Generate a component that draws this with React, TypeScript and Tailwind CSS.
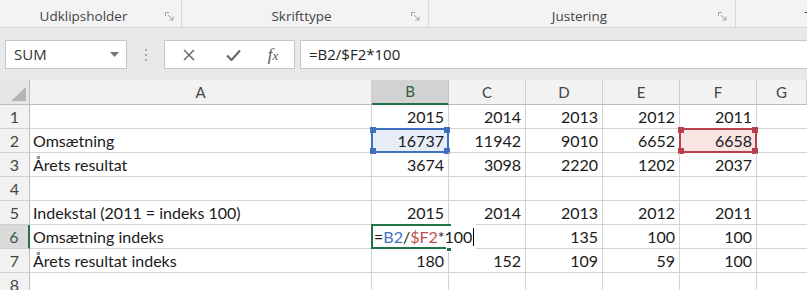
import React from "react";

const cellFont = { fontFamily: "Lato, 'Noto Sans', sans-serif" };

const rows: { n: number; a: string; vals: string[] }[] = [
  { n: 1, a: "", vals: ["2015", "2014", "2013", "2012", "2011"] },
  { n: 2, a: "Omsætning", vals: ["16737", "11942", "9010", "6652", "6658"] },
  { n: 3, a: "Årets resultat", vals: ["3674", "3098", "2220", "1202", "2037"] },
  { n: 4, a: "", vals: ["", "", "", "", ""] },
  { n: 5, a: "Indekstal (2011 = indeks 100)", vals: ["2015", "2014", "2013", "2012", "2011"] },
  { n: 6, a: "Omsætning indeks", vals: ["", "", "135", "100", "100"] },
  { n: 7, a: "Årets resultat indeks", vals: ["180", "152", "109", "59", "100"] },
  { n: 8, a: "", vals: ["", "", "", "", ""] },
];

function Launcher() {
  return (
    <svg width="9" height="9" viewBox="0 0 9 9" className="shrink-0">
      <path d="M0.5 0.5 H4 M0.5 0.5 V4" stroke="#a0a0a0" fill="none" />
      <path d="M3 3 L8 8 M8 4.5 V8 H4.5" stroke="#a0a0a0" fill="none" />
    </svg>
  );
}

function Corners({ color }: { color: string }) {
  const sq = "absolute w-[6px] h-[6px]";
  return (
    <>
      <div className={`${sq} -left-[3px] -top-[3px]`} style={{ background: color }} />
      <div className={`${sq} -right-[3px] -top-[3px]`} style={{ background: color }} />
      <div className={`${sq} -left-[3px] -bottom-[3px]`} style={{ background: color }} />
      <div className={`${sq} -right-[3px] -bottom-[3px]`} style={{ background: color }} />
    </>
  );
}

export default function App() {
  const cols = ["A", "B", "C", "D", "E", "F", "G"];
  return (
    <div className="w-[807px] h-[290px] overflow-hidden bg-white" style={{ fontFamily: "'Open Sans', 'Noto Sans', sans-serif" }}>
      {/* Ribbon group labels */}
      <div className="h-[28px] bg-[#f3f3f3] flex border-b border-[#d4d4d4] text-[13.5px] text-[#444]">
        <div className="w-[182px] flex items-center border-r border-[#dadada] pt-[5px]">
          <span className="flex-1 text-center pl-[2px]">Udklipsholder</span>
          <span className="pr-[7px]"><Launcher /></span>
        </div>
        <div className="w-[247px] flex items-center border-r border-[#dadada] pt-[5px]">
          <span className="flex-1 text-center pl-[10px]">Skrifttype</span>
          <span className="pr-[8px]"><Launcher /></span>
        </div>
        <div className="w-[307px] flex items-center border-r border-[#dadada] pt-[5px]">
          <span className="flex-1 text-center pl-[12px]">Justering</span>
          <span className="pr-[8px]"><Launcher /></span>
        </div>
        <div className="flex-1 flex items-center justify-end pt-[5px] overflow-hidden">
          <span className="mr-[-5px]">T</span>
        </div>
      </div>

      {/* Formula bar */}
      <div className="h-[52px] bg-[#e8e8e8] flex items-start pt-[12px]">
        <div className="ml-[5px] w-[122px] h-[29px] bg-white border border-[#c6c6c6] flex items-center justify-between pl-[8px] pr-[7px] text-[15px] text-[#333]">
          <span>SUM</span>
          <svg width="9" height="5" viewBox="0 0 9 5"><path d="M0 0 H9 L4.5 5 Z" fill="#777" /></svg>
        </div>
        <div className="w-[37px] h-[29px] flex flex-col items-center justify-center gap-[3px]">
          <div className="w-[2px] h-[2px] bg-[#a8a8a8]" />
          <div className="w-[2px] h-[2px] bg-[#a8a8a8]" />
          <div className="w-[2px] h-[2px] bg-[#a8a8a8]" />
        </div>
        <div className="w-[131px] h-[29px] bg-white border border-[#c6c6c6] flex items-center">
          <div className="w-[45px] flex justify-center pl-[2px]">
            <svg width="12" height="12" viewBox="0 0 12 12"><path d="M1 1 L11 11 M11 1 L1 11" stroke="#6a6a6a" strokeWidth="1.5" /></svg>
          </div>
          <div className="w-[46px] flex justify-center">
            <svg width="15" height="12" viewBox="0 0 15 12"><path d="M1 6.5 L5.5 11 L14 1.5" stroke="#6a6a6a" strokeWidth="2.2" fill="none" /></svg>
          </div>
          <div className="flex-1 flex justify-center pr-[4px]">
            <span className="text-[#555] italic text-[17px] leading-none" style={{ fontFamily: "'Liberation Serif', serif" }}>f<span className="text-[13px]">x</span></span>
          </div>
        </div>
        <div className="ml-[5px] flex-1 h-[29px] bg-white border border-[#c6c6c6] border-r-0 flex items-center pl-[8px] text-[15px] text-[#222]">
          =B2/$F2*100
        </div>
      </div>

      {/* Grid */}
      <div className="grid grid-cols-[30px_342px_77px_77px_77px_77px_77px_1fr] grid-rows-[25px_repeat(8,24px)] text-[16px] text-[#1a1a1a]" style={cellFont}>
        {/* Header row */}
        <div className="bg-[#e6e6e6] border-r border-b border-[#bdbdbd] relative">
          <svg width="15" height="14" viewBox="0 0 15 14" className="absolute right-[3px] bottom-[3px]"><path d="M15 0 L15 14 L0 14 Z" fill="#b4b4b4" /></svg>
        </div>
        {cols.map((c) => (
          <div
            key={c}
            className={
              c === "B"
                ? "bg-[#d2d2d2] border-r border-[#c6c6c6] border-b-2 border-b-[#217346] flex items-center justify-center text-[#2f5f45] text-[15px]"
                : "bg-[#f2f2f2] border-r border-b border-[#d0d0d0] border-b-[#bdbdbd] flex items-center justify-center text-[#444] text-[15px]"
            }
          >
            {c}
          </div>
        ))}
        {rows.map((r) => (
          <React.Fragment key={r.n}>
            <div className={`${r.n === 6 ? "bg-[#dadada] border-r-2 border-r-[#217346] text-[#2f5f45]" : "bg-[#f2f2f2] border-r border-r-[#bdbdbd] text-[#444]"} border-b border-[#d0d0d0] flex items-center justify-center pt-[1px]`}>
              {r.n}
            </div>
            <div className="border-r border-b border-[#d4d4d4] flex items-center pl-[3px] pt-[1px] whitespace-nowrap">{r.a}</div>
            {r.vals.map((v, i) => {
              const isB2 = r.n === 2 && i === 0;
              const isF2 = r.n === 2 && i === 4;
              const isB6 = r.n === 6 && i === 0;
              const isC6 = r.n === 6 && i === 1;
              return (
                <div
                  key={i}
                  className={`relative border-b border-[#d4d4d4] ${isB6 ? "" : "border-r"} ${isB2 ? "bg-[#e8eef8]" : ""} ${isF2 ? "bg-[#f9e3e3]" : ""} flex items-center justify-end pr-[4px] pt-[1px]`}
                >
                  {!isB6 && !isC6 && v}
                  {isB2 && (
                    <div className="absolute left-[-1px] top-[-1px] right-[-1px] bottom-[-1px] border-2 border-[#3f6fbf]">
                      <Corners color="#3f6fbf" />
                    </div>
                  )}
                  {isF2 && (
                    <div className="absolute left-[-1px] top-[-1px] right-[-1px] bottom-[-1px] border-2 border-[#b8404e]">
                      <Corners color="#b8404e" />
                    </div>
                  )}
                  {isB6 && (
                    <>
                      <div className="absolute left-[-1px] top-[-1px] bottom-[-1px] bg-white z-10 flex items-center pl-[3px] pr-[2px] pt-[1px] whitespace-nowrap">
                        <span>=</span>
                        <span className="text-[#4472c4]">B2</span>
                        <span>/</span>
                        <span className="text-[#c0504d]">$F2</span>
                        <span>*100</span>
                        <span className="inline-block w-[1px] h-[18px] bg-black ml-[1px]" />
                      </div>
                      <div className="absolute left-[-1px] top-[-1px] w-[80px] bottom-[-1px] border-2 border-r-0 border-[#217346] z-20" />
                      <div className="absolute right-[-3px] bottom-[-4px] w-[6px] h-[5px] bg-[#217346] border border-white z-30" />
                    </>
                  )}
                </div>
              );
            })}
            <div className="border-b border-[#d4d4d4]" />
          </React.Fragment>
        ))}
      </div>
    </div>
  );
}
